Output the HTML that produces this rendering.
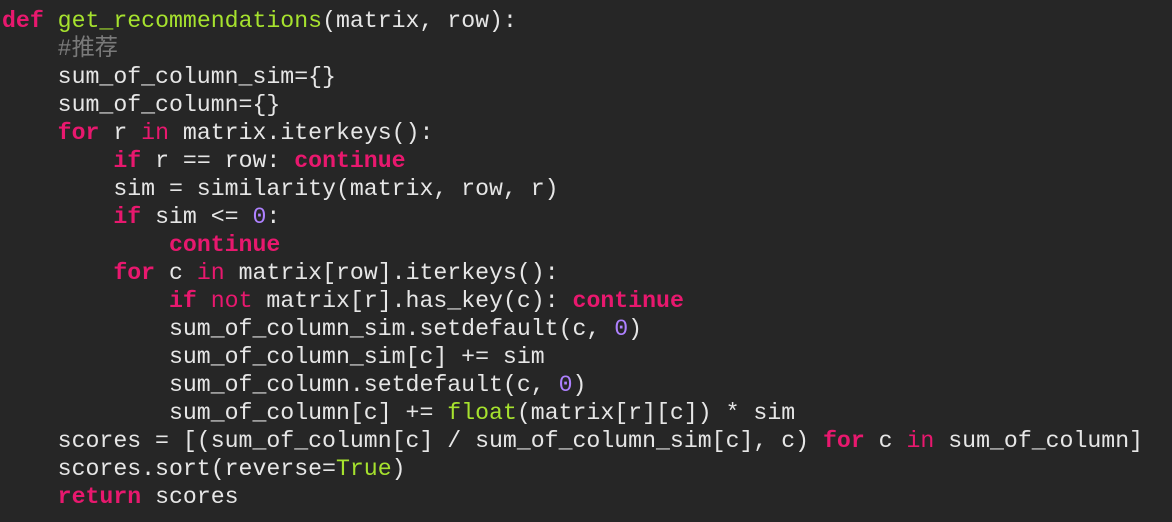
<!DOCTYPE html>
<html><head><meta charset="utf-8"><style>
html,body{margin:0;padding:0;background:#262626;width:1172px;height:522px;overflow:hidden}
pre{margin:0;padding:7px 0 0 2px;font-family:"Liberation Mono","Noto Sans CJK SC",monospace;font-size:23.2px;line-height:28px;color:#e6e6e6}
.k{color:#e8186e;font-weight:bold}
.i{color:#e8186e}
.f{color:#a6e22e}
.n{color:#ae81ff}
.c{color:#7a7a7a}
</style></head><body><pre><span class="k">def</span> <span class="f">get_recommendations</span>(matrix, row):
    <span class="c">#推荐</span>
    sum_of_column_sim={}
    sum_of_column={}
    <span class="k">for</span> r <span class="i">in</span> matrix.iterkeys():
        <span class="k">if</span> r == row: <span class="k">continue</span>
        sim = similarity(matrix, row, r)
        <span class="k">if</span> sim &lt;= <span class="n">0</span>:
            <span class="k">continue</span>
        <span class="k">for</span> c <span class="i">in</span> matrix[row].iterkeys():
            <span class="k">if</span> <span class="i">not</span> matrix[r].has_key(c): <span class="k">continue</span>
            sum_of_column_sim.setdefault(c, <span class="n">0</span>)
            sum_of_column_sim[c] += sim
            sum_of_column.setdefault(c, <span class="n">0</span>)
            sum_of_column[c] += <span class="f">float</span>(matrix[r][c]) * sim
    scores = [(sum_of_column[c] / sum_of_column_sim[c], c) <span class="k">for</span> c <span class="i">in</span> sum_of_column]
    scores.sort(reverse=<span class="f">True</span>)
    <span class="k">return</span> scores</pre></body></html>
